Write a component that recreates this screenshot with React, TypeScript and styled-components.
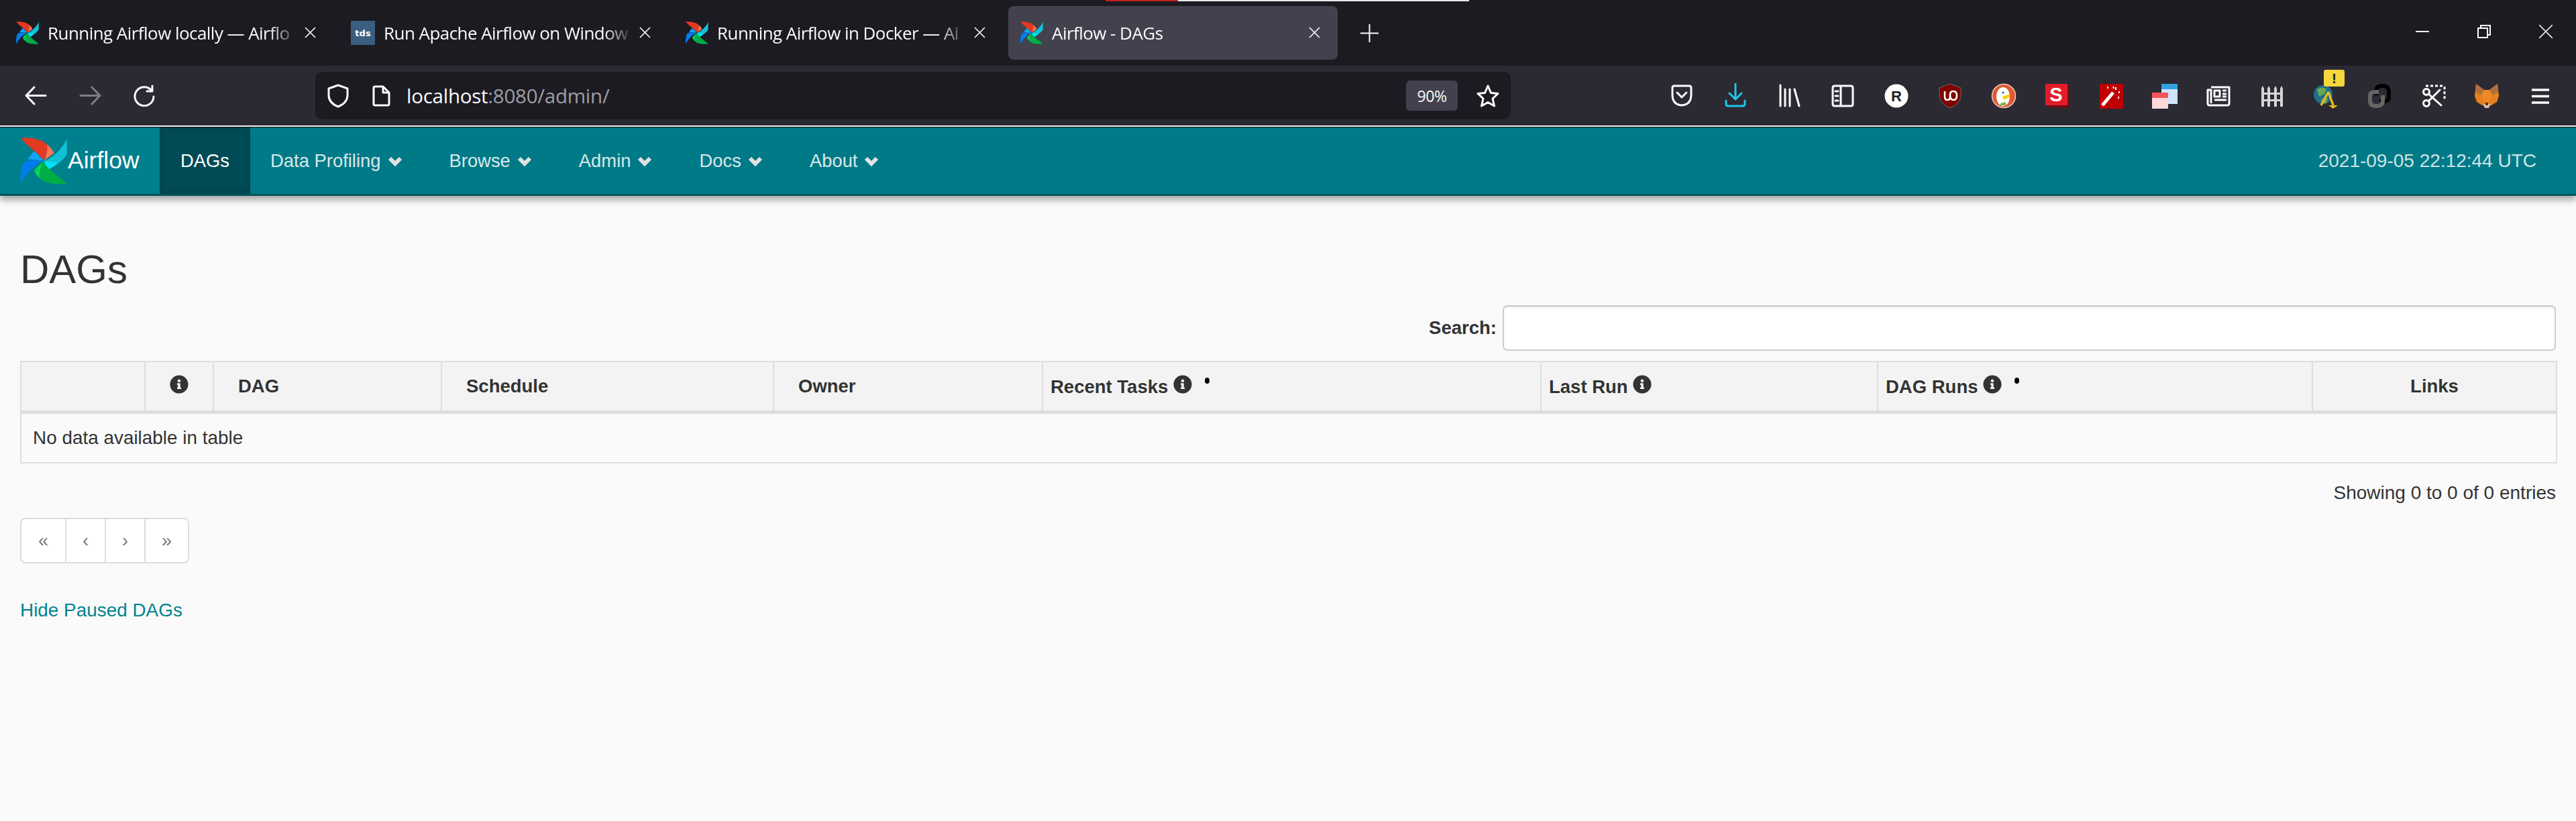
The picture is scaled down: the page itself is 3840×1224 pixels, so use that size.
import React from "react";
import styled, { createGlobalStyle } from "styled-components";
import { FaInfoCircle } from "react-icons/fa";

const Global = createGlobalStyle`
  html, body { margin: 0; padding: 0; background: #fafafa; }
  body { width: 3840px; height: 1224px; overflow: hidden; font-family: "Liberation Sans", Arial, sans-serif; color: #333; }
  * { box-sizing: border-box; }
`;

const Chrome = styled.header`display: flex; flex-direction: column; height: 189px;`;
const TabStrip = styled.div`
  position: relative; height: 98px; background: #1c1b22; display: flex; align-items: flex-start;
  padding: 9px 0 0 6px; gap: 8px;
`;
const Progress = styled.div`
  position: absolute; left: 1648px; top: 0; width: 542px; height: 2px;
  background: linear-gradient(90deg, #c4201f 0 108px, #e8e8e8 108px);
`;
const Tab = styled.div<{ $active?: boolean }>`
  width: 491px; height: 80px; flex: none; border-radius: 8px; display: flex; align-items: center;
  padding: 0 26px 0 18px; background: ${(p) => (p.$active ? "#42414d" : "transparent")};
`;
const TabTitle = styled.span`
  flex: 1; margin-left: 13px; white-space: nowrap; overflow: hidden; color: #fbfbfe;
  font-family: "Open Sans", "Noto Sans", sans-serif; font-size: 26px; letter-spacing: -0.55px; line-height: 40px;
  -webkit-mask-image: linear-gradient(90deg, #000 88%, transparent 100%);
  mask-image: linear-gradient(90deg, #000 88%, transparent 100%);
`;
const TabClose = styled.svg`width: 17px; height: 17px; flex: none; margin-left: 8px; margin-top: -2px;`;
const TdsIcon = styled.span`
  width: 36px; height: 36px; flex: none; background: #3a5d80; color: #fff; font-family: "DejaVu Sans", sans-serif;
  font-weight: 700; font-size: 13px; display: flex; align-items: center; justify-content: center;
`;
const NewTab = styled.svg`width: 27px; height: 27px; flex: none; margin: 27px 0 0 26px;`;
const WindowControls = styled.div`
  margin-left: auto; display: flex; align-items: center; height: 80px; padding-right: 35px; gap: 72px; margin-top: -2px;
`;
const WinIcon = styled.svg`width: 20px; height: 22px; display: block;`;

const Toolbar = styled.div`
  height: 89px; background: #2b2a33; display: flex; align-items: center; padding-left: 37px;
`;
const NavIcon = styled.svg<{ $dim?: boolean }>`
  width: 33px; height: 33px; flex: none; margin-right: 48px; opacity: ${(p) => (p.$dim ? 0.4 : 1)};
`;
const UrlBar = styled.div`
  width: 1782px; height: 71px; margin-left: 190px; flex: none; background: #1c1b22; border-radius: 10px;
  display: flex; align-items: center; padding: 0 17px;
`;
const UrlIcon = styled.svg`width: 34px; height: 36px; flex: none; margin-right: 33px;`;
const UrlPage = styled.svg`width: 28px; height: 32px; flex: none; margin-right: 24px;`;
const Url = styled.div`
  flex: 1; color: #fbfbfe; font-family: "Open Sans", "Noto Sans", sans-serif; font-size: 29.5px; letter-spacing: -0.25px;
  margin-top: -1px;
  span { color: #9e9ea5; }
`;
const ZoomBadge = styled.div`
  width: 77px; height: 45px; background: #42414d; border-radius: 6px; color: #fbfbfe; display: flex;
  align-items: center; justify-content: center; font-family: "Open Sans", sans-serif; font-size: 23px; letter-spacing: -0.5px;
  margin-right: 28px;
`;
const Star = styled.svg`width: 34px; height: 34px; flex: none;`;
const Extensions = styled.div`margin-left: 215px; display: flex; align-items: center; flex: none;`;
const ExtSlot = styled.div`
  position: relative; width: 80px; height: 70px; display: flex; align-items: center; justify-content: center;
`;
const ExtIcon = styled.svg`width: 38px; height: 38px; display: block;`;
const Badge = styled.span`
  position: absolute; left: 37px; top: -4px; width: 31px; height: 25px; border-radius: 3px; background: #f5d63d; color: #222;
  font: 700 21px/25px "Liberation Sans", sans-serif; text-align: center;
`;

const Nav = styled.nav`
  height: 103px; background: #007a87; border-bottom: 3px solid #03525c; display: flex; align-items: stretch;
  border-top: 1px solid #0b0b10; box-shadow: 0 6px 10px rgba(0,0,0,.35); position: relative;
`;
const Brand = styled.div`
  width: 238px; flex: none; display: flex; align-items: center; padding-left: 31px; color: #fff; font-size: 35.5px;
  background: #007f8c;
`;
const NavLink = styled.a<{ $active?: boolean }>`
  display: flex; align-items: center; padding: 0 ${(p) => (p.$active ? 31 : 30)}px; font-size: 27.4px;
  color: ${(p) => (p.$active ? "#fff" : "#d9e8ea")};
  background: ${(p) => (p.$active ? "#004b55" : "transparent")};
  box-shadow: ${(p) => (p.$active ? "inset 0 0 12px rgba(0,0,0,.15)" : "none")};
`;
const Caret = styled.svg`width: 22px; height: 16px; margin: 0 10px 0 10px; flex: none;`;
const Clock = styled.div`
  margin-left: auto; align-self: center; padding-right: 59px; font-size: 28px; color: #cfe3e5;
`;

const Main = styled.main`padding: 0 30px;`;
const Title = styled.h2`
  margin: 0; padding-top: 76px; font-weight: 400; font-size: 60px; line-height: 68px; color: #333;
`;
const SearchRow = styled.div`
  display: flex; justify-content: flex-end; align-items: center; gap: 9px; margin-top: 19px; font-size: 27.5px; font-weight: 700;
`;
const SearchInput = styled.input`
  width: 1570px; height: 68px; background: #fff; border: 2px solid #ccc; border-radius: 7px;
  box-shadow: inset 0 2px 2px rgba(0,0,0,.07); flex: none;
`;
const Table = styled.table`
  width: 3780px; margin-top: 15px; table-layout: fixed; border-collapse: collapse; border: 2px solid #ddd;
`;
const Th = styled.th<{ $align?: string; $pad?: number }>`
  height: 75px; background: #f3f3f3; border-right: 2px solid #ddd; border-bottom: 5px solid #ddd; font-weight: 700;
  font-size: 27.5px; text-align: ${(p) => p.$align || "left"}; padding: 0 ${(p) => p.$pad ?? 36}px; vertical-align: middle; white-space: nowrap;
  svg { width: 28px; height: 28px; vertical-align: -1px; color: #333; }
`;
const Sort = styled.span`
  display: inline-block; vertical-align: 14px; margin-left: 19px; width: 7px; height: 9px; border-radius: 50%; background: #000;
`;
const Td = styled.td`height: 76px; padding: 0 17px; font-size: 27.9px; color: #333;`;
const Info = styled.div`text-align: right; font-size: 28px; margin-top: 28px; line-height: 32px;`;
const Pager = styled.div`
  display: inline-flex; height: 68px; margin-top: 21px; border: 2px solid #ddd; border-radius: 8px; background: #fff; overflow: hidden;
`;
const PageBtn = styled.a<{ $w: number }>`
  width: ${(p) => p.$w}px; display: flex; align-items: center; justify-content: center; color: #777; font-size: 27px;
  & + & { border-left: 2px solid #ddd; }
`;
const ToggleLink = styled.a`
  display: block; margin-top: 54px; color: #00848f; font-size: 27.9px; line-height: 32px;
`;

const PinwheelArt: React.FC<{ className?: string }> = ({ className }) => (
  <svg className={className} viewBox="92 76 206 208">
    <path fill="#e43921" d="M92 78C130 74 190 84 207 105C215 125 205 160 192 178C180 150 130 125 92 78Z" />
    <path fill="#ff7557" d="M207 105C224 118 235 133 240 145L196 178C206 155 215 125 207 105Z" />
    <path fill="#11c1d6" d="M297 78L297 150C285 175 255 190 238 207L195 180C225 175 285 120 297 78Z" />
    <path fill="#00e1f5" d="M195 180L258 187L212 224Z" />
    <path fill="#00ad46" d="M297 282C250 285 195 280 178 258C170 235 180 205 192 180C205 215 260 245 297 282Z" />
    <path fill="#04d659" d="M152 222L190 182C182 205 170 235 178 258C165 248 155 235 152 222Z" />
    <path fill="#017cee" d="M92 282C90 240 95 200 108 185C120 175 140 175 192 180C160 190 115 235 92 282Z" />
    <path fill="#11a3ff" d="M122 172L150 137C165 148 183 165 192 179C165 176 140 174 122 172Z" />
  </svg>
);
const Favicon = styled(PinwheelArt)`width: 34px; height: 34px; flex: none;`;
const Logo = styled(PinwheelArt)`width: 69px; height: 70px; flex: none; margin-right: 1px;`;

const CloseGlyph = () => (
  <TabClose viewBox="0 0 17 17"><path d="M1 1L16 16M16 1L1 16" stroke="#fbfbfe" strokeWidth="1.6" /></TabClose>
);

const s = { fill: "none", stroke: "#fbfbfe", strokeWidth: 3, strokeLinecap: "round" as const, strokeLinejoin: "round" as const };

const extensions: React.ReactNode[] = [
  <path key="a" {...s} d="M5 7Q5 4 8 4H30Q33 4 33 7V17Q33 32 19 33Q5 32 5 17ZM12 14L19 21L26 14" />,
  <path key="a" {...s} stroke="#1fc6ea" d="M19 1V24M10 15L19 24L28 15M5 26V31Q5 34 8 34H30Q33 34 33 31V26" />,
  <path key="a" {...s} d="M6 3V34M13 9V34M20 9V34M27 9L34 34" />,
  <path key="a" {...s} d="M4 7Q4 4 7 4H31Q34 4 34 7V31Q34 34 31 34H7Q4 34 4 31ZM16 4V34M8 12H12M8 19H12M8 26H12" />,
  <g key="a"><circle cx="19" cy="19" r="17.5" fill="#fff" /><text x="19" y="27" fontFamily="Liberation Sans" fontWeight="700" fontSize="22" textAnchor="middle" fill="#222">R</text></g>,
  <g key="a"><path fill="#800000" stroke="#6a6a6a" strokeWidth="1" d="M19 1L35 7V20Q33 31 19 37Q5 31 3 20V7Z" /><path fill="none" stroke="#fff" strokeWidth="2.6" d="M11 12V20Q11 25 15 25Q19 25 19 20V17Q19 12 24 12Q29 12 29 18.5Q29 25 24 25Q19 25 19 18" /></g>,
  <g key="a"><circle cx="19" cy="19" r="17.5" fill="#de5833" stroke="#f4c7b5" strokeWidth="1.5" /><ellipse cx="18" cy="20" rx="10" ry="14" fill="#fff" /><path fill="#fdd20a" d="M17 20L28 16L28 21L19 25Z" /><path fill="#65bc46" d="M14 30L22 28V33L14 33Z" /><circle cx="18" cy="14" r="1.5" fill="#2d4f8e" /></g>,
  <g key="a"><path fill="#6a0d17" d="M3 32L8 37H37V6L34 2V32Z" /><rect x="1" y="1" width="33" height="32" fill="#e11d2a" /><text x="17" y="27" fontFamily="Liberation Sans" fontWeight="700" fontSize="29" textAnchor="middle" fill="#fff">S</text></g>,
  <g key="a"><rect x="2" y="1" width="35" height="37" fill="#c00000" /><path stroke="#fff" strokeWidth="5" d="M6 33L22 14" /><path stroke="#fff" strokeWidth="2" d="M26 6V10M31 12V15M22 5L23 8M30 20V23M14 5V8" /></g>,
  <g key="a"><rect x="14" y="1" width="24" height="30" fill="#cfe6fa" /><rect x="14" y="1" width="24" height="8" fill="#34a0e4" /><rect x="0" y="14" width="24" height="24" fill="#ffd9d9" /><rect x="0" y="14" width="24" height="8" fill="#f4545c" /></g>,
  <path key="a" {...s} strokeLinecap="butt" d="M8 6H35V30Q35 33 32 33H6Q3 33 3 30V10H8V30M13 11H21V20H13ZM25 11H31M25 16H31M25 20H31M13 25H31" />,
  <path key="a" fill="#d6d6d6" d="M3 8L5 4L7 8V14H12V8L14 4L16 8V14H22V8L24 4L26 8V14H31V8L33 4L35 8V35H31V27H26V35H22V27H16V35H12V27H7V35H3ZM7 17V24H12V17ZM16 17V24H22V17ZM26 17V24H31V17Z" />,
  <g key="a"><circle cx="15" cy="17" r="14" fill="#1f6f8b" /><path fill="#6aa84f" d="M6 9Q14 4 20 9L17 16L9 20ZM12 24L22 22L20 30L14 30Z" /><path fill="none" stroke="#e8b923" strokeWidth="3.5" d="M23 13L30 33M23 13L12 33" /><path fill="#e8b923" d="M23 33H37L30 38Z" /></g>,
  <g key="a" fill="none" strokeWidth="6"><path stroke="#000" d="M14 18V12Q14 4 23 4Q33 4 33 12V22Q33 27 24 27H19" /><path stroke="#666" d="M24 18V26Q24 34 14 34Q5 34 5 26V18Q5 13 14 13H18" /></g>,
  <g key="a" fill="none" stroke="#fff" strokeWidth="3"><path strokeDasharray="4 3" d="M8 4H33Q36 4 36 7V26" /><circle cx="9" cy="13" r="4.5" /><circle cx="9" cy="30" r="4.5" /><path strokeLinecap="round" d="M12 16L31 33M12 27L29 10" /></g>,
  <g key="a"><path fill="#e8801f" d="M3 1L15 10H23L35 1L37 19L34 28L24 34H14L4 28L1 19Z" /><path fill="#b0703a" d="M3 1L15 10L11 18L2 13ZM35 1L23 10L27 18L36 13Z" /><path fill="#f08a24" d="M11 18L15 10H23L27 18L23 27H15Z" /><path fill="#d7c1b3" d="M14 31H24L22 37H16Z" /><circle cx="19" cy="31" r="2" fill="#222" /></g>,
  <path key="a" stroke="#fbfbfe" strokeWidth="3.4" d="M6 10H32M6 19.5H32M6 29H32" />,
];

const headers = [
  { w: 185 }, { w: 102, icon: true, align: "center", pad: 0 }, { w: 340, label: "DAG" }, { w: 495, label: "Schedule" },
  { w: 401, label: "Owner" }, { w: 743, label: "Recent Tasks", icon: true, sort: true, pad: 11 },
  { w: 502, label: "Last Run", icon: true, pad: 11 }, { w: 648, label: "DAG Runs", icon: true, sort: true, pad: 11 },
  { w: 364, label: "Links", align: "center", pad: 0 },
];

const navItems = ["Data Profiling", "Browse", "Admin", "Docs", "About"];

export default function App() {
  return (
    <>
      <Global />
      <Chrome>
        <TabStrip>
          <Progress />
          <Tab><Favicon /><TabTitle>Running Airflow locally — Airflo</TabTitle><CloseGlyph /></Tab>
          <Tab><TdsIcon>tds</TdsIcon><TabTitle>Run Apache Airflow on Window</TabTitle><CloseGlyph /></Tab>
          <Tab><Favicon /><TabTitle>Running Airflow in Docker — Ai</TabTitle><CloseGlyph /></Tab>
          <Tab $active><Favicon /><TabTitle>Airflow - DAGs</TabTitle><CloseGlyph /></Tab>
          <NewTab viewBox="0 0 27 27"><path d="M13.5 0V27M0 13.5H27" stroke="#fbfbfe" strokeWidth="2" /></NewTab>
          <WindowControls>
            <WinIcon viewBox="0 0 20 22"><path d="M0 11H20" stroke="#fff" strokeWidth="2" /></WinIcon>
            <WinIcon viewBox="0 0 20 22"><path fill="none" stroke="#fff" strokeWidth="2" d="M1 6H15V20H1ZM5 6V2H19V16H15" /></WinIcon>
            <WinIcon viewBox="0 0 20 22"><path fill="none" stroke="#eee" strokeWidth="1.6" d="M0 1L20 21M20 1L0 21" /></WinIcon>
          </WindowControls>
        </TabStrip>
        <Toolbar>
          <NavIcon viewBox="0 0 33 33"><path {...s} d="M31 16.5H2M14 4L2 16.5L14 29" /></NavIcon>
          <NavIcon $dim viewBox="0 0 33 33"><path {...s} d="M2 16.5H31M19 4L31 16.5L19 29" /></NavIcon>
          <NavIcon viewBox="0 0 33 33"><path {...s} d="M27 9A14 14 0 1 0 30 18M28 2V10H20" /></NavIcon>
          <UrlBar>
            <UrlIcon viewBox="0 0 34 36"><path {...s} d="M17 2L31 7V18Q30 29 17 34Q4 29 3 18V7Z" /></UrlIcon>
            <UrlPage viewBox="0 0 28 32"><path {...s} d="M3 4Q3 2 5 2H17L26 11V28Q26 30 24 30H5Q3 30 3 28ZM17 2V11H26" /></UrlPage>
            <Url>localhost<span>:8080/admin/</span></Url>
            <ZoomBadge>90%</ZoomBadge>
            <Star viewBox="0 0 34 34"><path {...s} d="M17 2L21.5 12.5L32 13.5L24 21L26.5 32L17 26.5L7.5 32L10 21L2 13.5L12.5 12.5Z" /></Star>
          </UrlBar>
          <Extensions>
            {extensions.map((icon, i) => (
              <ExtSlot key={i}>
                <ExtIcon viewBox="0 0 38 38">{icon}</ExtIcon>
                {i === 12 && <Badge>!</Badge>}
              </ExtSlot>
            ))}
          </Extensions>
        </Toolbar>
      </Chrome>
      <Nav>
        <Brand><Logo />Airflow</Brand>
        <NavLink $active>DAGs</NavLink>
        {navItems.map((n) => (
          <NavLink key={n}>
            {n}
            <Caret viewBox="0 0 22 16"><path d="M3 4L11 12L19 4" fill="none" stroke="#e2e2e2" strokeWidth="6" /></Caret>
          </NavLink>
        ))}
        <Clock>2021-09-05 22:12:44 UTC</Clock>
      </Nav>
      <Main>
        <Title>DAGs</Title>
        <SearchRow>
          <label>Search:</label>
          <SearchInput />
        </SearchRow>
        <Table>
          <colgroup>
            {headers.map((h, i) => (<col key={i} style={{ width: h.w }} />))}
          </colgroup>
          <thead>
            <tr>
              {headers.map((h, i) => (
                <Th key={i} $align={h.align} $pad={h.pad}>
                  {h.label}{h.label && h.icon ? " " : ""}{h.icon && <FaInfoCircle />}{h.sort && <Sort />}
                </Th>
              ))}
            </tr>
          </thead>
          <tbody>
            <tr><Td colSpan={9}>No data available in table</Td></tr>
          </tbody>
        </Table>
        <Info>Showing 0 to 0 of 0 entries</Info>
        <Pager>
          <PageBtn $w={65}>«</PageBtn>
          <PageBtn $w={59}>‹</PageBtn>
          <PageBtn $w={59}>›</PageBtn>
          <PageBtn $w={65}>»</PageBtn>
        </Pager>
        <ToggleLink>Hide Paused DAGs</ToggleLink>
      </Main>
    </>
  );
}
